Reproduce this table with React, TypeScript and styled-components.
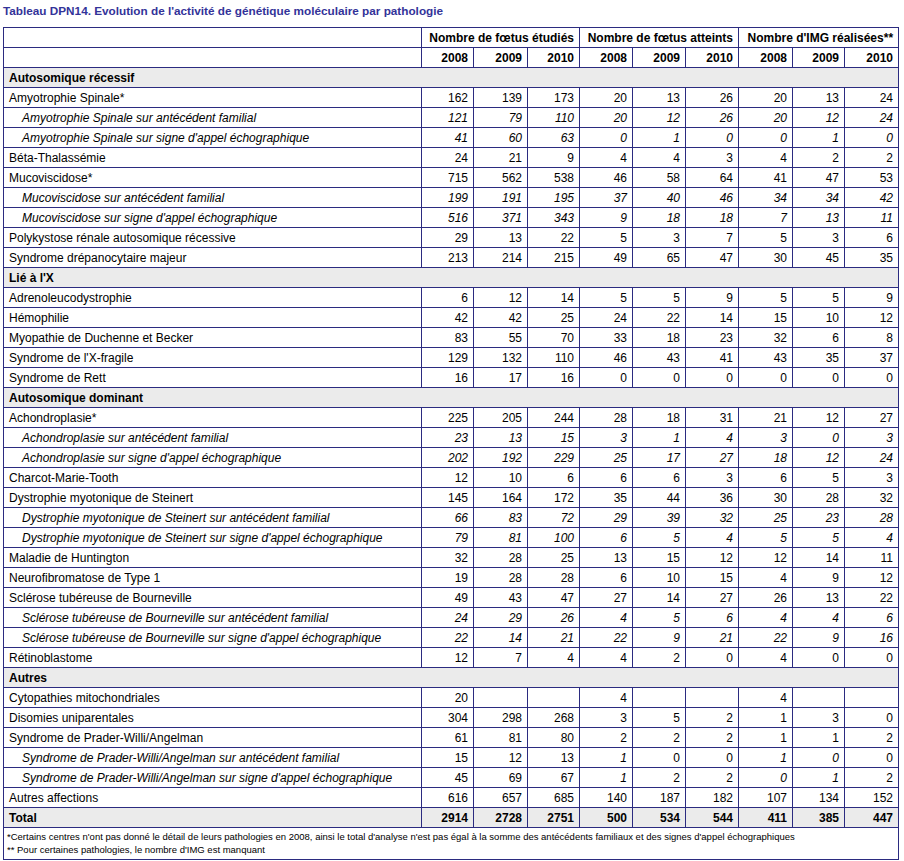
import React from "react";
import styled, { createGlobalStyle } from "styled-components";

const GlobalStyle = createGlobalStyle`
  html, body { margin: 0; padding: 0; background: #ffffff; }
  body { font-family: "Liberation Sans", Arial, sans-serif; color: #000; }
`;

const LINE = "#2b2b80";
const GREY = "#ebebeb";

const Page = styled.div`
  padding: 4px 0 0 3px;
  width: 896px;
`;

const Title = styled.div`
  font-size: 11.75px;
  font-weight: bold;
  line-height: 14px;
  color: #333399;
  margin-bottom: 9px;
`;

const Table = styled.table`
  border-collapse: collapse;
  table-layout: fixed;
  width: 896px;
  font-size: 12px;
  line-height: 14px;
`;

const Cell = styled.td`
  border: 1px solid ${LINE};
  height: 19px;
  padding: 0 5px;
  white-space: nowrap;
  overflow: hidden;
`;

const HeadCell = styled(Cell).attrs({ as: "th" })`
  font-weight: bold;
  text-align: right;
`;

const LabelCell = styled(Cell)<{ $sub?: boolean }>`
  text-align: left;
  padding-left: ${(p) => (p.$sub ? "18px" : "5px")};
  font-style: ${(p) => (p.$sub ? "italic" : "normal")};
`;

const NumCell = styled(Cell)<{ $italic?: boolean }>`
  text-align: right;
  font-style: ${(p) => (p.$italic ? "italic" : "normal")};
`;

const SectionCell = styled(Cell)`
  background: ${GREY};
  font-weight: bold;
  text-align: left;
`;

const TotalRow = styled.tr`
  & > td {
    background: ${GREY};
    font-weight: bold;
  }
`;

const FooterCell = styled(Cell)`
  height: auto;
  padding: 2px 4px 3px 3px;
  font-size: 9.5px;
  line-height: 13px;
  white-space: normal;
`;

type Row =
  | { kind: "section"; label: string }
  | { kind: "data"; label: string; sub?: boolean; values: (number | "")[]; upright?: number[] };

const rows: Row[] = [
  { kind: "section", label: "Autosomique récessif" },
  { kind: "data", label: "Amyotrophie Spinale*", values: [162, 139, 173, 20, 13, 26, 20, 13, 24] },
  { kind: "data", label: "Amyotrophie Spinale sur antécédent  familial", sub: true, values: [121, 79, 110, 20, 12, 26, 20, 12, 24] },
  { kind: "data", label: "Amyotrophie Spinale sur signe d'appel échographique", sub: true, values: [41, 60, 63, 0, 1, 0, 0, 1, 0] },
  { kind: "data", label: "Béta-Thalassémie", values: [24, 21, 9, 4, 4, 3, 4, 2, 2] },
  { kind: "data", label: "Mucoviscidose*", values: [715, 562, 538, 46, 58, 64, 41, 47, 53] },
  { kind: "data", label: "Mucoviscidose sur antécédent  familial", sub: true, values: [199, 191, 195, 37, 40, 46, 34, 34, 42] },
  { kind: "data", label: "Mucoviscidose sur signe d'appel échographique", sub: true, values: [516, 371, 343, 9, 18, 18, 7, 13, 11] },
  { kind: "data", label: "Polykystose rénale autosomique récessive", values: [29, 13, 22, 5, 3, 7, 5, 3, 6] },
  { kind: "data", label: "Syndrome drépanocytaire majeur", values: [213, 214, 215, 49, 65, 47, 30, 45, 35] },
  { kind: "section", label: "Lié à l'X" },
  { kind: "data", label: "Adrenoleucodystrophie", values: [6, 12, 14, 5, 5, 9, 5, 5, 9] },
  { kind: "data", label: "Hémophilie", values: [42, 42, 25, 24, 22, 14, 15, 10, 12] },
  { kind: "data", label: "Myopathie de Duchenne et Becker", values: [83, 55, 70, 33, 18, 23, 32, 6, 8] },
  { kind: "data", label: "Syndrome de l'X-fragile", values: [129, 132, 110, 46, 43, 41, 43, 35, 37] },
  { kind: "data", label: "Syndrome de Rett", values: [16, 17, 16, 0, 0, 0, 0, 0, 0] },
  { kind: "section", label: "Autosomique dominant" },
  { kind: "data", label: "Achondroplasie*", values: [225, 205, 244, 28, 18, 31, 21, 12, 27] },
  { kind: "data", label: "Achondroplasie sur antécédent familial", sub: true, values: [23, 13, 15, 3, 1, 4, 3, 0, 3] },
  { kind: "data", label: "Achondroplasie sur signe d'appel échographique", sub: true, values: [202, 192, 229, 25, 17, 27, 18, 12, 24] },
  { kind: "data", label: "Charcot-Marie-Tooth", values: [12, 10, 6, 6, 6, 3, 6, 5, 3] },
  { kind: "data", label: "Dystrophie myotonique de Steinert", values: [145, 164, 172, 35, 44, 36, 30, 28, 32] },
  { kind: "data", label: "Dystrophie myotonique de Steinert sur antécédent familial", sub: true, values: [66, 83, 72, 29, 39, 32, 25, 23, 28] },
  { kind: "data", label: "Dystrophie myotonique de Steinert sur signe d'appel échographique", sub: true, values: [79, 81, 100, 6, 5, 4, 5, 5, 4] },
  { kind: "data", label: "Maladie de Huntington", values: [32, 28, 25, 13, 15, 12, 12, 14, 11] },
  { kind: "data", label: "Neurofibromatose de Type 1", values: [19, 28, 28, 6, 10, 15, 4, 9, 12] },
  { kind: "data", label: "Sclérose tubéreuse de Bourneville", values: [49, 43, 47, 27, 14, 27, 26, 13, 22] },
  { kind: "data", label: "Sclérose tubéreuse de Bourneville sur antécédent familial", sub: true, values: [24, 29, 26, 4, 5, 6, 4, 4, 6] },
  { kind: "data", label: "Sclérose tubéreuse de Bourneville sur signe d'appel échographique", sub: true, values: [22, 14, 21, 22, 9, 21, 22, 9, 16] },
  { kind: "data", label: "Rétinoblastome", values: [12, 7, 4, 4, 2, 0, 4, 0, 0] },
  { kind: "section", label: "Autres" },
  { kind: "data", label: "Cytopathies mitochondriales", values: [20, "", "", 4, "", "", 4, "", ""] },
  { kind: "data", label: "Disomies uniparentales", values: [304, 298, 268, 3, 5, 2, 1, 3, 0] },
  { kind: "data", label: "Syndrome de Prader-Willi/Angelman", values: [61, 81, 80, 2, 2, 2, 1, 1, 2] },
  { kind: "data", label: "Syndrome de Prader-Willi/Angelman sur antécédent familial", sub: true, values: [15, 12, 13, 1, 0, 0, 1, 0, 0], upright: [0, 1, 2, 4, 5, 8] },
  { kind: "data", label: "Syndrome de Prader-Willi/Angelman sur signe d'appel échographique", sub: true, values: [45, 69, 67, 1, 2, 2, 0, 1, 2], upright: [0, 1, 2, 4, 5, 8] },
  { kind: "data", label: "Autres affections", values: [616, 657, 685, 140, 187, 182, 107, 134, 152] },
];

const totals = [2914, 2728, 2751, 500, 534, 544, 411, 385, 447];
const colWidths = [52, 54, 52, 53, 53, 53, 54, 52, 54];
const years = ["2008", "2009", "2010"];
const groups = ["Nombre de fœtus étudiés", "Nombre de fœtus atteints", "Nombre d'IMG réalisées**"];

export default function App() {
  return (
    <>
      <GlobalStyle />
      <Page>
        <Title>Tableau DPN14. Evolution de l'activité de génétique moléculaire par pathologie</Title>
        <Table>
          <colgroup>
            <col style={{ width: 418 }} />
            {colWidths.map((w, i) => (
              <col key={i} style={{ width: w }} />
            ))}
          </colgroup>
          <thead>
            <tr>
              <HeadCell />
              {groups.map((g) => (
                <HeadCell key={g} colSpan={3}>
                  {g}
                </HeadCell>
              ))}
            </tr>
            <tr>
              <HeadCell />
              {groups.map((g) =>
                years.map((y) => <HeadCell key={g + y}>{y}</HeadCell>)
              )}
            </tr>
          </thead>
          <tbody>
            {rows.map((r, i) =>
              r.kind === "section" ? (
                <tr key={i}>
                  <SectionCell colSpan={10}>{r.label}</SectionCell>
                </tr>
              ) : (
                <tr key={i}>
                  <LabelCell $sub={r.sub}>{r.label}</LabelCell>
                  {r.values.map((v, j) => (
                    <NumCell key={j} $italic={r.sub && !(r.upright || []).includes(j)}>
                      {v}
                    </NumCell>
                  ))}
                </tr>
              )
            )}
            <TotalRow>
              <LabelCell>Total</LabelCell>
              {totals.map((v, j) => (
                <NumCell key={j}>{v}</NumCell>
              ))}
            </TotalRow>
            <tr>
              <FooterCell colSpan={10}>
                *Certains centres n'ont pas donné le détail de leurs pathologies en 2008, ainsi le total d'analyse n'est pas égal à la somme des antécédents familiaux et des signes d'appel échographiques
                <br />
                ** Pour certaines pathologies, le nombre d'IMG est manquant
              </FooterCell>
            </tr>
          </tbody>
        </Table>
      </Page>
    </>
  );
}
